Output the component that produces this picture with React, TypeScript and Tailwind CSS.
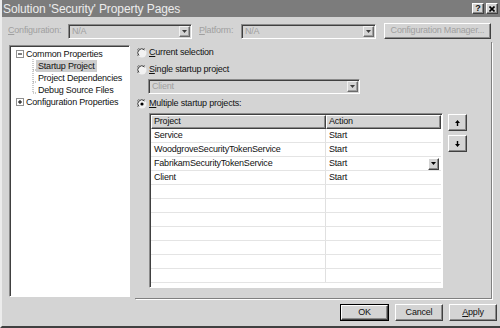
import React from 'react';

const raised =
  'border border-t-white border-l-white border-b-[#404040] border-r-[#404040] shadow-[inset_-1px_-1px_0_#8a8a8a]';
const sunken =
  'border border-t-[#8a8a8a] border-l-[#8a8a8a] border-b-white border-r-white shadow-[inset_1px_1px_0_#404040]';

const Arrow: React.FC<{ dir?: 'down' | 'up' }> = ({ dir = 'down' }) => (
  <svg width="5" height="3" viewBox="0 0 5 3" className={dir === 'up' ? 'rotate-180' : ''}>
    <path d="M0 0h5L2.5 3z" fill="#000" />
  </svg>
);

const DropBtn: React.FC<{ disabled?: boolean }> = ({ disabled }) => (
  <div className={`flex h-full w-[11px] items-center justify-center bg-[#d4d4d4] ${raised} ${disabled ? 'opacity-70' : ''}`}>
    <Arrow />
  </div>
);

const Combo: React.FC<{ text: string; width: string }> = ({ text, width }) => (
  <div className={`flex h-[15px] ${width} items-stretch bg-[#d4d4d4] p-[1px] ${sunken}`}>
    <span className="flex-1 pl-[2px] leading-[11px] text-[#a0a0a0]">{text}</span>
    <DropBtn disabled />
  </div>
);

const Radio: React.FC<{ checked?: boolean }> = ({ checked }) => (
  <svg width="10" height="10" viewBox="0 0 10 10" className="shrink-0">
    <circle cx="5" cy="5" r="4.5" fill="#f2f2f2" />
    <path d="M1 8A4.5 4.5 0 0 1 8 1" stroke="#808080" fill="none" />
    <path d="M2 7.5A3.5 3.5 0 0 1 7.5 2" stroke="#404040" fill="none" />
    {checked && <circle cx="5" cy="5" r="1.6" fill="#000" />}
  </svg>
);

const Mn: React.FC<{ c: string }> = ({ c }) => <span className="underline underline-offset-1">{c}</span>;

const rows = [
  ['Service', 'Start'],
  ['WoodgroveSecurityTokenService', 'Start'],
  ['FabrikamSecurityTokenService', 'Start'],
  ['Client', 'Start'],
  ['', ''],
  ['', ''],
  ['', ''],
  ['', ''],
  ['', ''],
  ['', ''],
  ['', ''],
];

const TreeBox: React.FC<{ open?: boolean }> = ({ open }) => (
  <svg width="8" height="8" viewBox="0 0 8 8" className="shrink-0">
    <rect x="0.5" y="0.5" width="7" height="7" fill="#fff" stroke="#909090" />
    <path d="M2 4h4" stroke="#000" />
    {!open && <path d="M4 2v4" stroke="#000" />}
  </svg>
);

const App: React.FC = () => {
  return (
    <div className="flex h-[328px] w-[500px] flex-col overflow-hidden bg-[#d4d4d4] font-['Liberation_Sans',Arial,sans-serif] text-[9px] tracking-[-0.2px] text-[#111] border-l-[2px] border-l-[#ececec] border-b-[2px] border-b-[#404040]">
      {/* title bar */}
      <div className="flex h-[17px] items-center justify-between bg-[#7c7c7c] pl-[1px] pr-[2px]">
        <span className="text-[12px] tracking-[-0.1px] text-[#ececec]">Solution 'Security' Property Pages</span>
        <div className="flex gap-[2px]">
          <div className={`flex h-[11px] w-[12px] items-center justify-center bg-[#d4d4d4] text-[9px] font-bold leading-none ${raised}`}>?</div>
          <div className={`flex h-[11px] w-[12px] items-center justify-center bg-[#d4d4d4] ${raised}`}>
            <svg width="6" height="6" viewBox="0 0 6 6">
              <path d="M0.5 0.5l5 5M5.5 0.5l-5 5" stroke="#000" strokeWidth="1.6" />
            </svg>
          </div>
        </div>
      </div>

      {/* configuration row */}
      <div className="mt-[6px] flex h-[16px] items-center">
        <span className="ml-[6px] w-[60px] text-[#a0a0a0]"><Mn c="C" />onfiguration:</span>
        <Combo text="N/A" width="w-[124px]" />
        <span className="ml-[7px] w-[42px] text-[#a0a0a0]"><Mn c="P" />latform:</span>
        <Combo text="N/A" width="w-[135px]" />
        <div className={`ml-[8px] flex h-[16px] w-[107px] items-center justify-center bg-[#d4d4d4] text-[#a0a0a0] ${raised}`}>
          Configuration Manager...
        </div>
      </div>

      {/* main area */}
      <div className="mt-[3px] flex h-[257px]">
        <div className={`ml-[7px] mt-[3px] h-[252px] w-[121px] bg-white ${sunken}`}>
          <div className="relative pt-[2px] leading-[12px]">
            <svg width="20" height="40" className="absolute left-[22px] top-[13px]">
              <path d="M1 0v34M1 11h4M1 23h4M1 34h4" stroke="#9a9a9a" strokeDasharray="1 1" />
            </svg>
            <div className="flex h-[12px] items-center">
              <span className="ml-[6px] mr-[2px]"><TreeBox open /></span>
              <span>Common Properties</span>
            </div>
            <div className="flex h-[12px] items-center pl-[26px]">
              <span className="bg-[#cdcdcd] px-[2px]">Startup Project</span>
            </div>
            <div className="flex h-[12px] items-center pl-[28px]">Project Dependencies</div>
            <div className="flex h-[12px] items-center pl-[28px]">Debug Source Files</div>
            <div className="flex h-[12px] items-center">
              <span className="ml-[6px] mr-[2px]"><TreeBox /></span>
              <span>Configuration Properties</span>
            </div>
          </div>
        </div>

        <div className="ml-[5px] flex w-[357px] flex-col border-r border-b border-r-[#808080] border-b-[#808080] shadow-[1px_1px_0_#fff] pl-[2px] pt-[5px]">
          <div className="flex h-[12px] items-center gap-[1px]">
            <Radio />
            <span className="ml-[1px]"><Mn c="C" />urrent selection</span>
          </div>
          <div className="mt-[5px] flex h-[12px] items-center">
            <Radio />
            <span className="ml-[2px]"><Mn c="S" />ingle startup project</span>
          </div>
          <div className="ml-[11px] mt-[3px]">
            <Combo text="Client" width="w-[212px]" />
          </div>
          <div className="mt-[4px] flex h-[12px] items-center">
            <Radio checked />
            <span className="ml-[2px]"><Mn c="M" />ultiple startup projects:</span>
          </div>

          <div className="ml-[12px] mt-[3px] flex">
            <div className={`h-[175px] w-[294px] overflow-hidden bg-white p-[1px] ${sunken}`}>
              <div className="flex h-[14px] bg-[#d4d4d4]">
                <div className={`flex w-[175px] items-center pl-[2px] ${raised}`}>Project</div>
                <div className={`flex flex-1 items-center pl-[2px] ${raised}`}>Action</div>
              </div>
              {rows.map(([p, a], i) => (
                <div key={i} className="flex h-[14px] border-b border-b-[#e4e4e4]">
                  <div className="flex w-[175px] items-center border-r border-r-[#e0e0e0] pl-[3px]">{p}</div>
                  <div className="flex flex-1 items-center pl-[3px]">
                    <span className="flex-1">{a}</span>
                    {i === 2 && (
                      <div className="mr-[2px] h-[12px]">
                        <DropBtn />
                      </div>
                    )}
                  </div>
                </div>
              ))}
            </div>
            <div className="ml-[5px] flex flex-col gap-[4px] pt-[1px]">
              <div className={`flex h-[17px] w-[19px] items-center justify-center bg-[#d4d4d4] ${raised}`}>
                <svg width="5" height="6" viewBox="0 0 5 6"><path d="M2.5 0L5 3H3.2V6H1.8V3H0z" fill="#000" /></svg>
              </div>
              <div className={`flex h-[17px] w-[19px] items-center justify-center bg-[#d4d4d4] ${raised}`}>
                <svg width="5" height="6" viewBox="0 0 5 6"><path d="M2.5 6L5 3H3.2V0H1.8V3H0z" fill="#000" /></svg>
              </div>
            </div>
          </div>
        </div>
      </div>

      {/* buttons */}
      <div className="mt-[5px] flex justify-end gap-[6px] pr-[3px]">
        <div className="border border-black">
          <div className={`flex h-[15px] w-[47px] items-center justify-center bg-[#d4d4d4] ${raised}`}>OK</div>
        </div>
        <div className={`flex h-[17px] w-[48px] items-center justify-center bg-[#d4d4d4] ${raised}`}>Cancel</div>
        <div className={`flex h-[17px] w-[48px] items-center justify-center bg-[#d4d4d4] ${raised}`}>
          <span><Mn c="A" />pply</span>
        </div>
      </div>
    </div>
  );
};

export default App;
